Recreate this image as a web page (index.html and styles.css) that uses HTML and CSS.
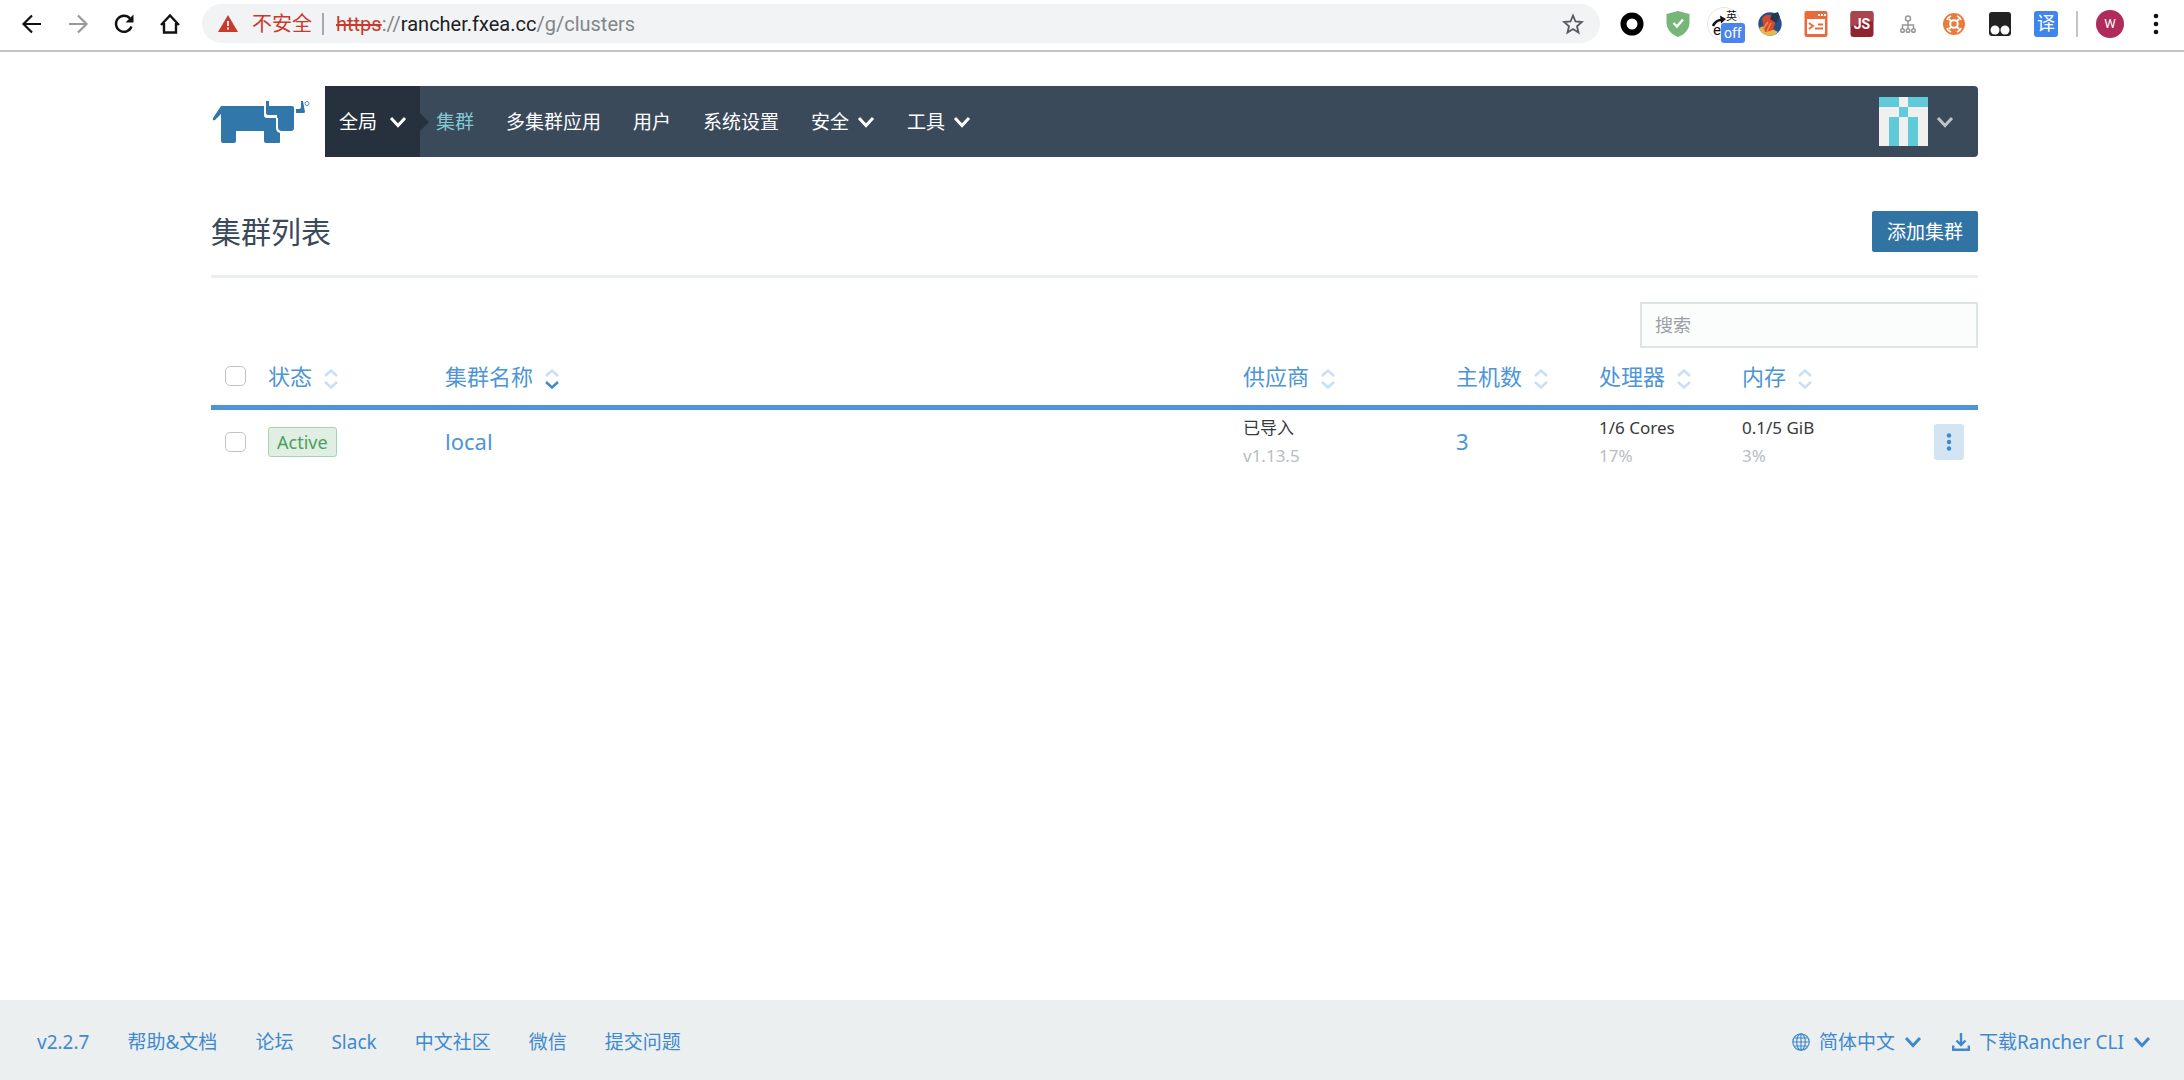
FILE: index.html
```html
<!DOCTYPE html>
<html lang="zh-CN">
<head>
<meta charset="utf-8">
<title>Rancher</title>
<link rel="stylesheet" href="styles.css">
</head>
<body>
<svg class="sprite" aria-hidden="true">
  <symbol id="chevron" viewBox="0 0 18 12"><path d="M2 2l7 7.500 7-7.500" fill="none" stroke="currentColor" stroke-width="3"/></symbol>
  <symbol id="sort-up" viewBox="0 0 14 8"><path d="M1 7l6-5.500L13 7" fill="none" stroke="currentColor" stroke-width="2.500"/></symbol>
  <symbol id="sort-down" viewBox="0 0 14 8"><path d="M1 1l6 5.500L13 1" fill="none" stroke="currentColor" stroke-width="2.500"/></symbol>
</svg>

<div class="browser">
  <div class="browser-nav">
    <button class="tool" aria-label="Back"><svg width="22" height="22" viewBox="0 0 22 22"><path d="M20 11H3M11 2.500L2.500 11l8.500 8.500" fill="none" stroke="#111" stroke-width="2.200"/></svg></button>
    <button class="tool" aria-label="Forward"><svg width="22" height="22" viewBox="0 0 22 22"><path d="M2 11h17M11 2.500l8.500 8.500-8.500 8.500" fill="none" stroke="#999" stroke-width="2.200"/></svg></button>
    <button class="tool" aria-label="Reload"><svg width="22" height="22" viewBox="0 0 22 22"><path d="M18.500 13.500A8 8 0 1 1 17 5.500" fill="none" stroke="#111" stroke-width="2.400"/><path d="M20.500 1.500V9.500H12.500z" fill="#111"/></svg></button>
    <button class="tool" aria-label="Home"><svg width="22" height="22" viewBox="0 0 22 22"><path d="M2 12L11 2.500 20 12M5 10v9.500h12V10" fill="none" stroke="#111" stroke-width="2.400"/></svg></button>
  </div>
  <div class="omnibox">
    <svg width="20" height="17" viewBox="0 0 20 17"><path d="M10 0l10 17H0z" fill="#c93a2c"/><path d="M10 6v5M10 12.500v2" stroke="#fff" stroke-width="1.800"/></svg>
    <span class="insecure">不安全</span>
    <span class="omni-sep"></span>
    <span class="url"><s>https</s>://<b>rancher.fxea.cc</b>/g/clusters</span>
    <svg class="star" width="22" height="22" viewBox="0 0 22 22"><path d="M11 2.500l2.500 6 6.300.500-4.800 4.200 1.500 6.300L11 16.100 5.500 19.500 7 13.200 2.200 9l6.300-.500z" fill="none" stroke="#555a60" stroke-width="1.800"/></svg>
  </div>
  <div class="extensions">
    <svg width="24" height="26" viewBox="0 0 24 26"><circle cx="12" cy="13" r="8.500" fill="none" stroke="#000" stroke-width="6"/></svg>
    <svg width="24" height="26" viewBox="0 0 24 26"><path d="M12 0l11.500 3v8c0 7-4 12-11.500 15C4.500 23 .500 18 .500 11V3z" fill="#77b579"/><path d="M7.500 12l3.500 3.500 6-7" fill="none" stroke="#fff" stroke-width="2.400"/></svg>
    <span class="ext-lang"><svg width="34" height="34" viewBox="0 0 34 34"><circle cx="17" cy="17" r="16.500" fill="#fff" stroke="#e6e6e6"/><path d="M6 19q3-6 8-6" fill="none" stroke="#111" stroke-width="2.600"/><path d="M13 8.500l6 3.500-5 4.500z" fill="#111"/></svg><span class="lang-zh">英</span><span class="lang-en">e</span><span class="lang-off">off</span></span>
    <svg width="24" height="26" viewBox="0 0 24 26"><circle cx="12" cy="13" r="11.700" fill="#24508a"/><path d="M1 17q4-3 9-1t10 5a11.700 11.700 0 0 1-17 0z" fill="#e3b94c"/><path d="M4 8q3-5 8-4l6 5-3 10-8 2z" fill="#d9482b"/><path d="M14 3l6-2 2 5-4 6-6-4z" fill="#26364d"/><path d="M5 18l5-7M9 20l4-8" stroke="#f08a4a" stroke-width="1.500"/></svg>
    <svg width="24" height="26" viewBox="0 0 24 26"><rect x=".500" width="23" height="26" rx="2" fill="#ea6a3c"/><path d="M3 8h18v15H3z" fill="#fff"/><path d="M5 12l4 3-4 3M11 17.500h8M14 13.500h5" fill="none" stroke="#ea6a3c" stroke-width="2"/><path d="M14 4h2M17 4h2M20 4h2" stroke="#fff" stroke-width="2"/></svg>
    <svg width="24" height="26" viewBox="0 0 24 26"><rect x=".500" width="23" height="26" rx="3" fill="#8f2430"/><path d="M.500 3q0-3 3-3h17q3 0 3 3v7q-12 1-23 6z" fill="#a94450"/><text class="js-text" x="12" y="18" text-anchor="middle">JS</text></svg>
    <svg width="24" height="26" viewBox="0 0 24 26"><g fill="none" stroke="#999" stroke-width="1.500"><circle cx="12" cy="7.500" r="2.500"/><path d="M12 10v8M6.500 18v-4h11v4"/><circle cx="6.500" cy="19.500" r="1.800"/><circle cx="12" cy="19.500" r="1.800"/><circle cx="17.500" cy="19.500" r="1.800"/></g></svg>
    <svg width="24" height="26" viewBox="0 0 24 26"><circle cx="12" cy="13" r="11" fill="#e77c3c"/><circle cx="12" cy="13" r="3.800" fill="none" stroke="#fff" stroke-width="2"/><path d="M5 9q1-3 4-4M15 5q3 1 4 4M19 17q-1 3-4 4M9 21q-3-1-4-4M7 8l2.500 2.500M17 8l-2.500 2.500M7 18l2.500-2.500M17 18l-2.500-2.500" fill="none" stroke="#fff" stroke-width="1.800"/></svg>
    <svg width="24" height="26" viewBox="0 0 24 26"><rect x="1" y="1" width="22" height="24" rx="3" fill="#222"/><circle cx="7" cy="19" r="4.500" fill="#fff"/><circle cx="17" cy="19" r="4.500" fill="#fff"/></svg>
    <span class="ext-translate">译</span>
  </div>
  <span class="bar-sep"></span>
  <span class="profile">W</span>
  <button class="tool" aria-label="Menu"><svg width="22" height="22" viewBox="0 0 22 22"><g fill="#111"><circle cx="11" cy="3" r="2.300"/><circle cx="11" cy="11" r="2.300"/><circle cx="11" cy="19" r="2.300"/></g></svg></button>
</div>

<main class="page">
  <header class="header">
    <a href="#" class="logo" aria-label="Rancher"><svg width="100" height="44" viewBox="0 0 100 44"><g fill="#3277aa"><path d="M9 6h43v9q0 3 3 3h9v10q0 4 4 5v9q0 1-1 1H54q-2 0-2-2V31H24v10q0 2-2 2H11q-2 0-2-2V14L3 20q-3 1-2-2z"/><path d="M54 1h3v5h23q2 0 2 2v20q0 3-3 3h-9q-4 0-4-4v-9h-1v-3H56q-2 0-2-2z"/><path d="M84 9h3q2 0 2-2V1h2l2 11q0 1-2 1h-7z"/></g><circle cx="95" cy="3.500" r="2" fill="none" stroke="#3277aa" stroke-width=".800"/></svg></a>
    <nav class="nav">
      <button class="scope">全局<svg width="18" height="12"><use href="#chevron"/></svg></button>
      <a href="#" class="nav-item current">集群</a>
      <a href="#" class="nav-item">多集群应用</a>
      <a href="#" class="nav-item">用户</a>
      <a href="#" class="nav-item">系统设置</a>
      <button class="nav-item">安全<svg width="18" height="12"><use href="#chevron"/></svg></button>
      <button class="nav-item">工具<svg width="18" height="12"><use href="#chevron"/></svg></button>
      <button class="account" aria-label="Account"><svg width="49" height="49" viewBox="0 0 5 5" shape-rendering="crispEdges"><path d="M0 0h5v5H0z" fill="#f0f0f0"/><path d="M0 0h2v1H0zM3 0h2v1H3zM2 1h1v1H2zM1 2h1v3H1zM3 2h1v3H3z" fill="#60cad8"/></svg><svg class="account-chevron" width="18" height="12"><use href="#chevron"/></svg></button>
    </nav>
  </header>

  <section class="title-row">
    <h1>集群列表</h1>
    <button class="primary">添加集群</button>
  </section>

  <div class="search-row"><input class="search" type="search" placeholder="搜索" aria-label="搜索"></div>

  <table class="clusters">
    <colgroup><col class="c-check"><col class="c-state"><col><col class="c-provider"><col class="c-metric"><col class="c-metric"><col class="c-memory"></colgroup>
    <thead>
      <tr>
        <th class="check"><input type="checkbox" aria-label="全选"></th>
        <th><a href="#" class="sort">状态<span class="arrows"><svg width="14" height="8"><use href="#sort-up"/></svg><svg width="14" height="8"><use href="#sort-down"/></svg></span></a></th>
        <th><a href="#" class="sort">集群名称<span class="arrows"><svg width="14" height="8"><use href="#sort-up"/></svg><svg class="on" width="14" height="8"><use href="#sort-down"/></svg></span></a></th>
        <th><a href="#" class="sort">供应商<span class="arrows"><svg width="14" height="8"><use href="#sort-up"/></svg><svg width="14" height="8"><use href="#sort-down"/></svg></span></a></th>
        <th><a href="#" class="sort">主机数<span class="arrows"><svg width="14" height="8"><use href="#sort-up"/></svg><svg width="14" height="8"><use href="#sort-down"/></svg></span></a></th>
        <th><a href="#" class="sort">处理器<span class="arrows"><svg width="14" height="8"><use href="#sort-up"/></svg><svg width="14" height="8"><use href="#sort-down"/></svg></span></a></th>
        <th><a href="#" class="sort">内存<span class="arrows"><svg width="14" height="8"><use href="#sort-up"/></svg><svg width="14" height="8"><use href="#sort-down"/></svg></span></a></th>
      </tr>
    </thead>
    <tbody>
      <tr>
        <td class="check"><input type="checkbox" aria-label="local"></td>
        <td><span class="badge">Active</span></td>
        <td><a href="#" class="name">local</a></td>
        <td><div class="value">已导入</div><div class="note">v1.13.5</div></td>
        <td><a href="#" class="name">3</a></td>
        <td><div class="value">1/6 Cores</div><div class="note">17%</div></td>
        <td><div class="last"><div><div class="value">0.1/5 GiB</div><div class="note">3%</div></div><button class="more" aria-label="操作"><svg width="6" height="18" viewBox="0 0 6 18" fill="#4189cd"><circle cx="3" cy="2.500" r="2.200"/><circle cx="3" cy="9" r="2.200"/><circle cx="3" cy="15.500" r="2.200"/></svg></button></div></td>
      </tr>
    </tbody>
  </table>
</main>

<footer class="footer">
  <a href="#">v2.2.7</a>
  <a href="#">帮助&amp;文档</a>
  <a href="#">论坛</a>
  <a href="#">Slack</a>
  <a href="#">中文社区</a>
  <a href="#">微信</a>
  <a href="#">提交问题</a>
  <div class="footer-right">
    <button><svg width="18" height="18" viewBox="0 0 18 18" fill="none" stroke="currentColor" stroke-width="1.200"><circle cx="9" cy="9" r="8.200"/><ellipse cx="9" cy="9" rx="4.300" ry="8.200"/><path d="M9 1v16M1 9h16M2.500 5h13M2.500 13h13"/></svg>简体中文<svg width="18" height="12"><use href="#chevron"/></svg></button>
    <button><svg width="18" height="18" viewBox="0 0 18 18" fill="none" stroke="currentColor"><path d="M9 0v11M4.500 7.500L9 12l4.500-4.500" stroke-width="2.400"/><path d="M1.200 12.500v4.200h15.600v-4.200" stroke-width="2.400"/></svg>下载Rancher CLI<svg width="18" height="12"><use href="#chevron"/></svg></button>
  </div>
</footer>
</body>
</html>
```
FILE: styles.css
```css
* { box-sizing: border-box; }

body {
  margin: 0;
  min-height: 100vh;
  display: flex;
  flex-direction: column;
  background: #fff;
  color: #36393d;
  font-family: "Noto Sans", "Noto Sans CJK SC", sans-serif;
  font-size: 19px;
  line-height: 28px;
}

a { color: inherit; text-decoration: none; }
button { font: inherit; color: inherit; background: none; border: 0; padding: 0; }
svg { display: block; flex: none; }
.sprite { position: absolute; width: 0; height: 0; }

/* Browser toolbar */
.browser {
  display: flex;
  align-items: center;
  height: 52px;
  padding: 0 17px 3px 21px;
  border-bottom: 2px solid #c4c4c4;
  font-family: Roboto, "Noto Sans CJK SC", sans-serif;
}
.browser-nav { display: flex; gap: 24px; margin-right: 21px; }
.omnibox {
  flex: 1;
  display: flex;
  align-items: center;
  height: 39px;
  padding: 0 16px;
  border-radius: 20px;
  background: #f1f3f4;
}
.insecure { margin-left: 14px; color: #c93a2c; font-size: 20px; }
.omni-sep { width: 2px; height: 22px; margin: 0 12px 0 10px; background: #a6a9ad; }
.url { color: #80868b; font-size: 20px; }
.url s { color: #c93a2c; }
.url b { color: #202124; font-weight: 400; }
.star { margin-left: auto; }
.extensions { display: flex; align-items: center; gap: 22px; margin-left: 20px; }
.ext-lang { position: relative; width: 24px; height: 34px; }
.ext-lang svg { margin-left: -5px; }
.lang-zh, .lang-en, .lang-off { position: absolute; color: #111; }
.lang-zh { left: 14px; top: 3px; font-size: 11px; line-height: 14px; }
.lang-en { left: 1px; top: 15px; font-size: 15px; line-height: 16px; }
.lang-off {
  left: 9px;
  top: 16px;
  padding: 0 3px;
  border-radius: 3px;
  background: #4c84ee;
  color: #fff;
  font-size: 14px;
  line-height: 20px;
}
.js-text { fill: #fff; font-size: 14px; font-weight: 700; }
.ext-translate {
  width: 24px;
  height: 26px;
  border-radius: 3px;
  background: #3f85ee;
  color: #fff;
  font-size: 18px;
  line-height: 26px;
  text-align: center;
}
.bar-sep { width: 2px; height: 26px; margin: 0 18px; background: #c4c4c4; }
.profile {
  width: 28px;
  height: 28px;
  margin-right: 21px;
  border-radius: 50%;
  background: #b02a5b;
  color: #fff;
  font-size: 13px;
  line-height: 28px;
  text-align: center;
}

/* Page */
.page { flex: 1; padding: 34px 206px 0 211px; }
.header { display: flex; align-items: center; }
.logo { width: 114px; padding-left: 1px; }
.nav {
  flex: 1;
  display: flex;
  height: 71px;
  border-radius: 0 4px 4px 0;
  background: #3a4a5b;
  color: #fff;
}
.scope {
  position: relative;
  display: flex;
  align-items: center;
  gap: 12px;
  width: 95px;
  padding-left: 14px;
  background: #27313d;
}
.scope::after {
  content: "";
  position: absolute;
  left: 100%;
  top: 27px;
  border: 9px solid transparent;
  border-right: 0;
  border-left-color: #27313d;
}
.nav-item { display: flex; align-items: center; gap: 8px; padding: 0 16px; }
.current { color: #83c9d3; }
.account { display: flex; align-items: center; gap: 8px; margin-left: auto; padding-right: 24px; }
.account-chevron { color: #bdc3c8; }

.title-row {
  display: flex;
  justify-content: space-between;
  align-items: center;
  margin-top: 40px;
  padding: 14px 0 23px;
  border-bottom: 3px solid #ebefef;
}
h1 { margin: 0; color: #3a4a5b; font-size: 30px; font-weight: 400; line-height: 41px; }
.primary { height: 41px; padding: 0 15px; border-radius: 2px; background: #3174a4; color: #fff; }

.search-row { display: flex; justify-content: flex-end; padding-top: 24px; }
.search {
  width: 338px;
  height: 46px;
  padding: 0 13px;
  border: 2px solid #dce4e6;
  border-radius: 0;
  background: #fbfdfc;
  font: inherit;
  font-size: 18px;
}
.search::placeholder { color: #9a9fa5; }

.clusters { width: 100%; table-layout: fixed; border-collapse: collapse; }
.c-check { width: 57px; }
.c-state { width: 177px; }
.c-provider { width: 213px; }
.c-metric { width: 143px; }
.clusters col:nth-child(4) { width: 213px; }
.c-memory { width: 236px; }
th, td { padding: 0; text-align: left; vertical-align: middle; }
th { height: 59px; border-bottom: 5px solid #4d95d6; color: #4189cd; font-size: 22px; font-weight: 400; }
td { height: 68px; }
.check { padding-left: 14px; }
input[type="checkbox"] {
  appearance: none;
  display: block;
  width: 21px;
  height: 20px;
  margin: 0;
  border: 1px solid #c3c3c3;
  border-radius: 5px;
  background: #fff;
}
.sort { display: inline-flex; align-items: center; gap: 12px; color: #4d95d6; }
.arrows { display: flex; flex-direction: column; gap: 4px; padding-top: 6px; color: #c8dff4; }
.on { color: #4189cd; }
.badge {
  display: inline-block;
  padding: 0 8px;
  border: 1px solid #a5d6b0;
  border-radius: 3px;
  background: #e0eee4;
  color: #4aa15d;
  font-size: 18px;
}
.name { color: #4d95d6; font-size: 22px; }
.value { font-size: 17px; }
.note { color: #b8bdc2; font-size: 17px; }
.last { display: flex; justify-content: space-between; align-items: center; padding-right: 14px; }
.more {
  display: flex;
  align-items: center;
  justify-content: center;
  width: 30px;
  height: 36px;
  border-radius: 3px;
  background: #d3e4f3;
}

/* Footer */
.footer {
  display: flex;
  align-items: center;
  gap: 38px;
  height: 80px;
  padding: 4px 33px 0 37px;
  background: #ebefef;
  color: #4189cd;
}
.footer-right { display: flex; gap: 30px; margin-left: auto; }
.footer-right button { display: flex; align-items: center; gap: 9px; }
```
